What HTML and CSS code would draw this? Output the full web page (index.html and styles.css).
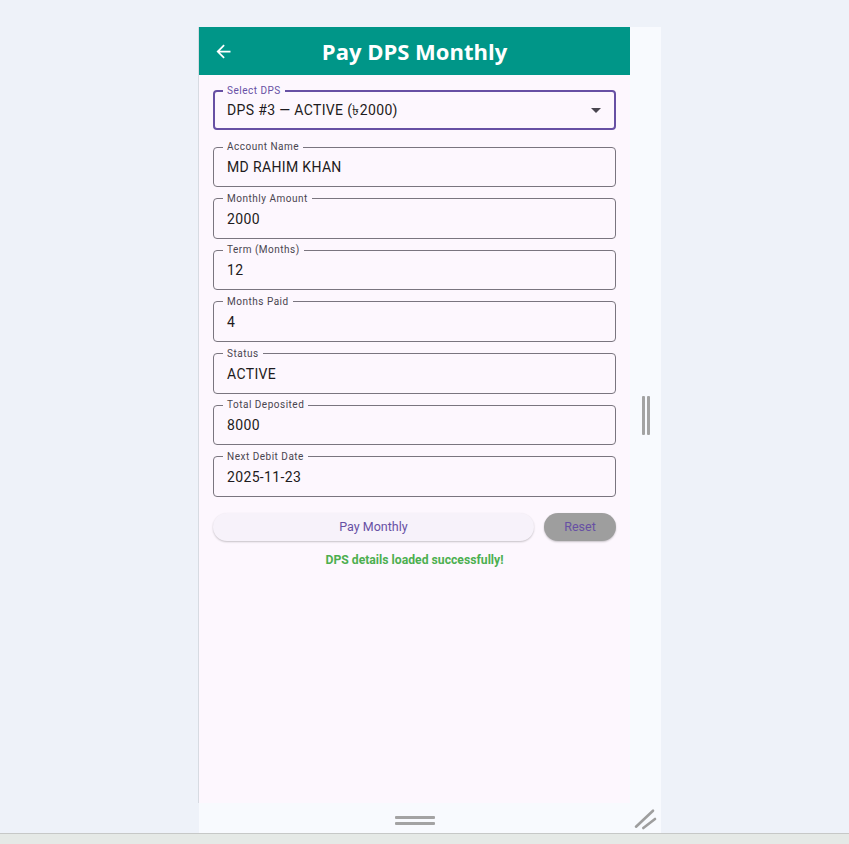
FILE: index.html
```html
<!DOCTYPE html>
<html lang="en">
<head>
<meta charset="utf-8">
<title>Pay DPS Monthly</title>
<link rel="stylesheet" href="styles.css">
</head>
<body>
<div class="screen">
  <div class="device">
    <div class="app">
      <header class="appbar">
        <span class="back">
          <svg width="21" height="21" viewBox="0 0 24 24"><path fill="#fff" d="M20 11H7.83l5.59-5.59L12 4l-8 8 8 8 1.41-1.41L7.83 13H20v-2z"/></svg>
        </span>
        <h1 class="title">Pay DPS Monthly</h1>
        <span></span>
      </header>
      <main class="content">
        <fieldset class="field select">
          <legend>Select DPS</legend>
          <div class="row">
            <span class="value">DPS #3 — ACTIVE (৳2000)</span>
            <svg class="caret" width="10" height="5" viewBox="0 0 10 5"><path fill="#49454f" d="M0 0l5 5 5-5z"/></svg>
          </div>
        </fieldset>
        <div class="fields">
          <fieldset class="field"><legend>Account Name</legend><div class="value">MD RAHIM KHAN</div></fieldset>
          <fieldset class="field"><legend>Monthly Amount</legend><div class="value">2000</div></fieldset>
          <fieldset class="field"><legend>Term (Months)</legend><div class="value">12</div></fieldset>
          <fieldset class="field"><legend>Months Paid</legend><div class="value">4</div></fieldset>
          <fieldset class="field"><legend>Status</legend><div class="value">ACTIVE</div></fieldset>
          <fieldset class="field"><legend>Total Deposited</legend><div class="value">8000</div></fieldset>
          <fieldset class="field"><legend>Next Debit Date</legend><div class="value">2025-11-23</div></fieldset>
        </div>
        <div class="actions">
          <button class="btn btn-pay">Pay Monthly</button>
          <button class="btn btn-reset">Reset</button>
        </div>
        <p class="msg">DPS details loaded successfully!</p>
      </main>
    </div>
    <div class="side"><span class="vbar"></span><span class="vbar"></span></div>
    <div class="bottom"><span class="hbar"></span><span class="hbar"></span></div>
    <div class="corner">
      <svg width="31" height="30" viewBox="0 0 31 30"><path d="M6 23.7L23 7.7M13.3 25L25 16" stroke="#9e9e9e" stroke-width="2.6" stroke-linecap="round" fill="none"/></svg>
    </div>
  </div>
</div>
<div class="taskbar"></div>
</body>
</html>
```
FILE: styles.css
```css
html, body {
  margin: 0;
  padding: 0;
}
body {
  background: #eef2f9;
  font-family: Roboto, "Noto Sans", "DejaVu Sans", sans-serif;
  height: 844px;
  overflow: hidden;
  display: flex;
  flex-direction: column;
}
.screen {
  flex: 0 0 833px;
  box-sizing: border-box;
  padding: 27px 0 0 199px;
}
.device {
  width: 462px;
  height: 806px;
  display: grid;
  grid-template-columns: 431px 31px;
  grid-template-rows: 776px 30px;
}
.taskbar {
  flex: 1;
  border-top: 1px solid #c6c8c7;
  background: #e5e9e6;
}
.app {
  background: #fdf7fe;
  box-shadow: -1px 0 0 #d7dbe2;
  display: flex;
  flex-direction: column;
}
.appbar {
  height: 48px;
  flex: 0 0 48px;
  background: #009688;
  display: grid;
  grid-template-columns: 48px 1fr 48px;
  align-items: center;
}
.back {
  display: flex;
  justify-content: center;
  align-items: center;
}
.title {
  margin: 0;
  color: #fff;
  font-family: "Open Sans", sans-serif;
  font-weight: 700;
  font-size: 22px;
  line-height: 1;
  text-align: center;
}
.content {
  padding: 10px 14px 0;
  display: flex;
  flex-direction: column;
}
.field {
  margin: 0;
  min-width: 0;
  border: 1px solid #7a757f;
  border-radius: 4px;
  padding: 4px 13px 9px;
}
.field legend {
  margin-left: -4px;
  padding: 0 4px;
  font-size: 10px;
  line-height: 12px;
  letter-spacing: 0.5px;
  color: #49454f;
}
.value {
  font-size: 14px;
  line-height: 20px;
  letter-spacing: 0.35px;
  color: #1d1b20;
}
.select {
  border: 2px solid #6750a4;
  padding: 3px 13px 8px 12px;
}
.select legend {
  color: #6750a4;
}
.row {
  display: flex;
  align-items: center;
  justify-content: space-between;
}
.caret {
  display: block;
}
.fields {
  margin-top: 11px;
  display: flex;
  flex-direction: column;
  gap: 5.67px;
}
.actions {
  display: flex;
  gap: 10px;
  margin-top: 16px;
}
.btn {
  height: 28px;
  border: 0;
  border-radius: 14px;
  font-family: Roboto, sans-serif;
  font-size: 12.5px;
  font-weight: 400;
  color: #6750a4;
  box-shadow: 0 1px 2px rgba(0, 0, 0, 0.22);
  padding: 0;
}
.btn-pay {
  flex: 1;
  background: #f7f2fa;
}
.btn-reset {
  width: 72px;
  background: #9e9e9e;
}
.msg {
  margin: 11px 0 0;
  text-align: center;
  color: #4caf50;
  font-weight: 700;
  font-size: 12.2px;
  line-height: 16px;
}
.side {
  background: #f8fafe;
  display: flex;
  justify-content: center;
  align-items: center;
  gap: 2px;
}
.vbar {
  width: 3px;
  height: 39px;
  background: #a3a3a3;
  border-radius: 1px;
}
.bottom {
  background: #f8fafe;
  display: flex;
  flex-direction: column;
  align-items: center;
  justify-content: center;
  gap: 3px;
  padding-top: 4px;
  box-sizing: border-box;
}
.hbar {
  width: 40px;
  height: 3px;
  background: #a3a3a3;
  border-radius: 1px;
}
.corner {
  background: #f8fafe;
}
.corner svg {
  display: block;
}
```
